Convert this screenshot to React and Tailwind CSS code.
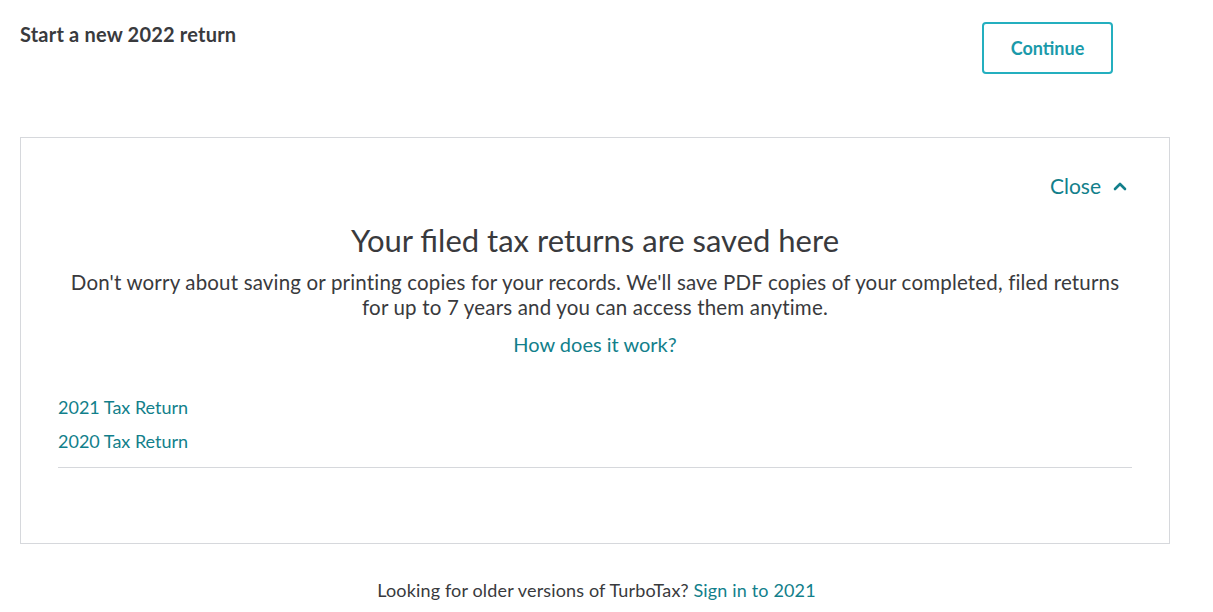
import React from 'react'

const ChevronUp = () => (
  <svg width="14" height="10" viewBox="0 0 14 10" className="ml-3">
    <path d="M2 8 L7 3 L12 8" fill="none" stroke="currentColor" strokeWidth="2.6" strokeLinecap="round" strokeLinejoin="round" />
  </svg>
)

export default function App() {
  return (
    <div className="min-h-[612px] w-[1213px] bg-white font-['Lato','Noto_Sans',sans-serif] text-[#393a3d]">
      <div className="flex justify-between pl-5 pr-[100px] pt-[22px]">
        <h2 className="text-[20px] font-bold leading-[24px] tracking-[0.2px] text-[#393a3d]">Start a new 2022 return</h2>
        <button className="h-[52px] w-[131px] rounded-[4px] border-2 border-[#24afbf] text-[18px] font-bold text-[#1a9aaa]">
          Continue
        </button>
      </div>

      <div className="mx-5 mt-[63px] h-[407px] w-[1150px] border border-[#d6d8dc] px-[37px] pt-[34px]">
        <div className="flex justify-end pr-[5px]">
          <button className="flex items-center text-[21px] leading-[28px] text-[#127f8b]">
            Close
            <ChevronUp />
          </button>
        </div>
        <div className="mt-[22px] text-center">
          <h1 className="text-[31px] leading-[36px] text-[#393a3d]">Your filed tax returns are saved here</h1>
          <p className="mx-auto mt-[12px] max-w-[1070px] text-[20.5px] leading-[25px] tracking-[0.17px] text-[#393a3d]">
            Don't worry about saving or printing copies for your records. We'll save PDF copies of your completed, filed returns for up to 7 years and you can access them anytime.
          </p>
          <a className="mt-[12px] inline-block text-[20px] leading-[25px] text-[#127f8b]">How does it work?</a>
        </div>
        <div className="mt-[37px] flex flex-col gap-[10px] border-b border-[#d6d8dc] pb-[14px]">
          <a className="text-[18px] leading-[24px] text-[#127f8b]">2021 Tax Return</a>
          <a className="text-[18px] leading-[24px] text-[#127f8b]">2020 Tax Return</a>
        </div>
      </div>

      <p className="mt-[34px] pr-[20px] text-center text-[18px] leading-[24px] tracking-[0.15px] text-[#393a3d]">
        Looking for older versions of TurboTax? <a className="text-[#127f8b]">Sign in to 2021</a>
      </p>
    </div>
  )
}
